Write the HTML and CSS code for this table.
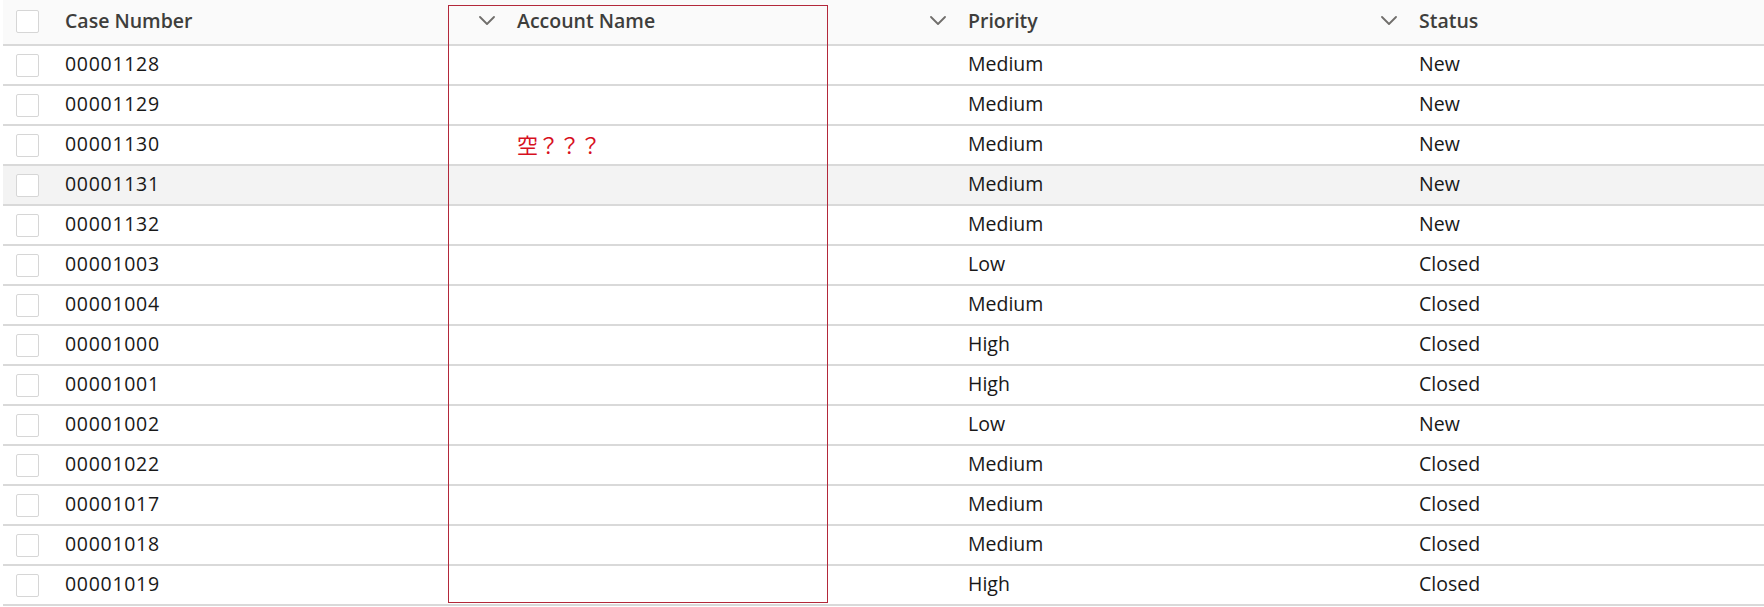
FILE: index.html
```html
<!DOCTYPE html>
<html lang="en">
<head>
<meta charset="utf-8">
<title>Cases</title>
<link rel="stylesheet" href="styles.css">
</head>
<body>
<div class="table">
  <div class="row head">
    <div class="cell check"><span class="box"></span></div>
    <div class="cell hcell"><span class="label">Case Number</span><svg class="chev" viewBox="0 0 16 9" width="16" height="9"><path d="M1 1 L8 8 L15 1" /></svg></div>
    <div class="cell hcell"><span class="label">Account Name</span><svg class="chev" viewBox="0 0 16 9" width="16" height="9"><path d="M1 1 L8 8 L15 1" /></svg></div>
    <div class="cell hcell"><span class="label">Priority</span><svg class="chev" viewBox="0 0 16 9" width="16" height="9"><path d="M1 1 L8 8 L15 1" /></svg></div>
    <div class="cell hcell"><span class="label">Status</span></div>
  </div>
  <div class="row"><div class="cell check"><span class="box"></span></div><div class="cell num">00001128</div><div class="cell"></div><div class="cell">Medium</div><div class="cell">New</div></div>
  <div class="row"><div class="cell check"><span class="box"></span></div><div class="cell num">00001129</div><div class="cell"></div><div class="cell">Medium</div><div class="cell">New</div></div>
  <div class="row"><div class="cell check"><span class="box"></span></div><div class="cell num">00001130</div><div class="cell"><span class="note">空？？？</span></div><div class="cell">Medium</div><div class="cell">New</div></div>
  <div class="row hover"><div class="cell check"><span class="box"></span></div><div class="cell num">00001131</div><div class="cell"></div><div class="cell">Medium</div><div class="cell">New</div></div>
  <div class="row"><div class="cell check"><span class="box"></span></div><div class="cell num">00001132</div><div class="cell"></div><div class="cell">Medium</div><div class="cell">New</div></div>
  <div class="row"><div class="cell check"><span class="box"></span></div><div class="cell num">00001003</div><div class="cell"></div><div class="cell">Low</div><div class="cell">Closed</div></div>
  <div class="row"><div class="cell check"><span class="box"></span></div><div class="cell num">00001004</div><div class="cell"></div><div class="cell">Medium</div><div class="cell">Closed</div></div>
  <div class="row"><div class="cell check"><span class="box"></span></div><div class="cell num">00001000</div><div class="cell"></div><div class="cell">High</div><div class="cell">Closed</div></div>
  <div class="row"><div class="cell check"><span class="box"></span></div><div class="cell num">00001001</div><div class="cell"></div><div class="cell">High</div><div class="cell">Closed</div></div>
  <div class="row"><div class="cell check"><span class="box"></span></div><div class="cell num">00001002</div><div class="cell"></div><div class="cell">Low</div><div class="cell">New</div></div>
  <div class="row"><div class="cell check"><span class="box"></span></div><div class="cell num">00001022</div><div class="cell"></div><div class="cell">Medium</div><div class="cell">Closed</div></div>
  <div class="row"><div class="cell check"><span class="box"></span></div><div class="cell num">00001017</div><div class="cell"></div><div class="cell">Medium</div><div class="cell">Closed</div></div>
  <div class="row"><div class="cell check"><span class="box"></span></div><div class="cell num">00001018</div><div class="cell"></div><div class="cell">Medium</div><div class="cell">Closed</div></div>
  <div class="row"><div class="cell check"><span class="box"></span></div><div class="cell num">00001019</div><div class="cell"></div><div class="cell">High</div><div class="cell">Closed</div></div>
  <div class="annot"></div>
</div>
</body>
</html>
```

FILE: styles.css
```css
html, body {
  margin: 0;
  padding: 0;
  background: #ffffff;
}

body {
  font-family: "Open Sans", "Noto Sans", sans-serif;
  font-size: 19.5px;
  color: #181818;
  overflow: hidden;
}

.table {
  position: relative;
  margin-left: 3px;
}

.row {
  display: grid;
  grid-template-columns: 49px 452px 451px 451px 1fr;
  height: 38px;
  border-bottom: 2px solid #d9d9d9;
  background: #ffffff;
}

.row.head {
  height: 44px;
  background: #fafafa;
}

.row.hover {
  background: #f3f3f3;
}

.cell {
  display: flex;
  align-items: center;
  padding-left: 13px;
  padding-bottom: 3px;
  white-space: nowrap;
  min-width: 0;
}

.cell.check {
  padding-left: 13px;
  padding-bottom: 0;
}

.num {
  letter-spacing: 0.7px;
}

.box {
  display: block;
  width: 21px;
  height: 21px;
  border: 1px solid #d6d6d6;
  border-radius: 2px;
  background: #ffffff;
}

.head .box {
  margin-top: -2px;
}

.hcell {
  justify-content: space-between;
  padding-right: 9px;
  padding-bottom: 4px;
}

.label {
  font-weight: 600;
  color: #3e3e3c;
}

.chev {
  display: block;
  fill: none;
  stroke: #706e6b;
  stroke-width: 1.8;
  stroke-linecap: round;
  stroke-linejoin: round;
}

.note {
  font-family: "Noto Sans CJK JP", "Noto Sans CJK SC", sans-serif;
  font-size: 21px;
  color: #d7101e;
}

.annot {
  position: absolute;
  left: 445px;
  top: 5px;
  width: 378px;
  height: 596px;
  border: 1px solid #b3283a;
  pointer-events: none;
}
```
